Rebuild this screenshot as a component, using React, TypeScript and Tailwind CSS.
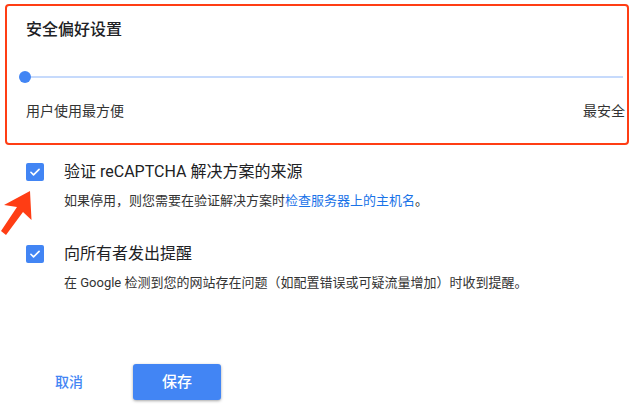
import React from "react";

function Check() {
  return (
    <div className="w-[18px] h-[18px] rounded-[2px] bg-[#4285f4] flex items-center justify-center shrink-0">
      <svg width="14" height="14" viewBox="0 0 24 24" fill="none">
        <path d="M5 12.5l4.5 4.5L19 7.5" stroke="white" strokeWidth="2.8" strokeLinecap="round" strokeLinejoin="round" />
      </svg>
    </div>
  );
}

export default function App() {
  return (
    <div
      className="relative w-[630px] h-[411px] bg-white overflow-hidden text-[#202124]"
      style={{ fontFamily: 'Roboto, "Noto Sans CJK SC", sans-serif' }}
    >
      <div className="pt-[4px] pl-[5px] pr-[1px]">
        <div className="h-[141px] border-2 border-[#ff3d14] rounded-[4px] pl-[19px] pr-[2px]">
          <div className="pt-[13px] text-[16px] leading-[22px] font-medium">安全偏好设置</div>
          <div className="relative mt-[30px] h-[12px] flex items-center">
            <div className="absolute -left-[1px] right-[2px] top-[5px] h-[2px] bg-[#c6dafc]" />
            <div className="relative w-[12px] h-[12px] rounded-full bg-[#4285f4] -ml-[7px]" />
          </div>
          <div className="mt-[18px] flex justify-between text-[14px] leading-[20px] text-[#333]">
            <span>用户使用最方便</span>
            <span>最安全</span>
          </div>
        </div>
      </div>

      <div className="pl-[26px] mt-[16px]">
        <div className="flex items-center h-[22px]">
          <Check />
          <div className="ml-[20px] text-[16px] leading-[22px]">验证 reCAPTCHA 解决方案的来源</div>
        </div>
        <div className="ml-[38px] mt-[8px] text-[13px] leading-[20px] text-[#333]">
          如果停用，则您需要在验证解决方案时<span className="text-[#1a73e8]">检查服务器上的主机名</span>。
        </div>

        <div className="flex items-center h-[22px] mt-[32px]">
          <Check />
          <div className="ml-[20px] text-[16px] leading-[22px]">向所有者发出提醒</div>
        </div>
        <div className="ml-[38px] mt-[8px] text-[13px] leading-[20px] text-[#333]">
          在 Google 检测到您的网站存在问题（如配置错误或可疑流量增加）时收到提醒。
        </div>
      </div>

      <div className="flex items-center mt-[71px] pl-[55px]">
        <span className="text-[14px] font-medium text-[#4285f4]">取消</span>
        <button className="ml-[50px] w-[88px] h-[36px] rounded-[3px] bg-[#4285f4] text-white text-[15px] font-medium shadow-[0_1px_3px_rgba(0,0,0,0.35)]">
          保存
        </button>
      </div>

      <svg className="absolute left-0 top-[188px]" width="36" height="50" viewBox="0 0 36 50">
        <path d="M30 3 L31.5 32 L23 24 L6 47 L1 43 L17 19 L4 17 Z" fill="#ff3d14" />
      </svg>
    </div>
  );
}
